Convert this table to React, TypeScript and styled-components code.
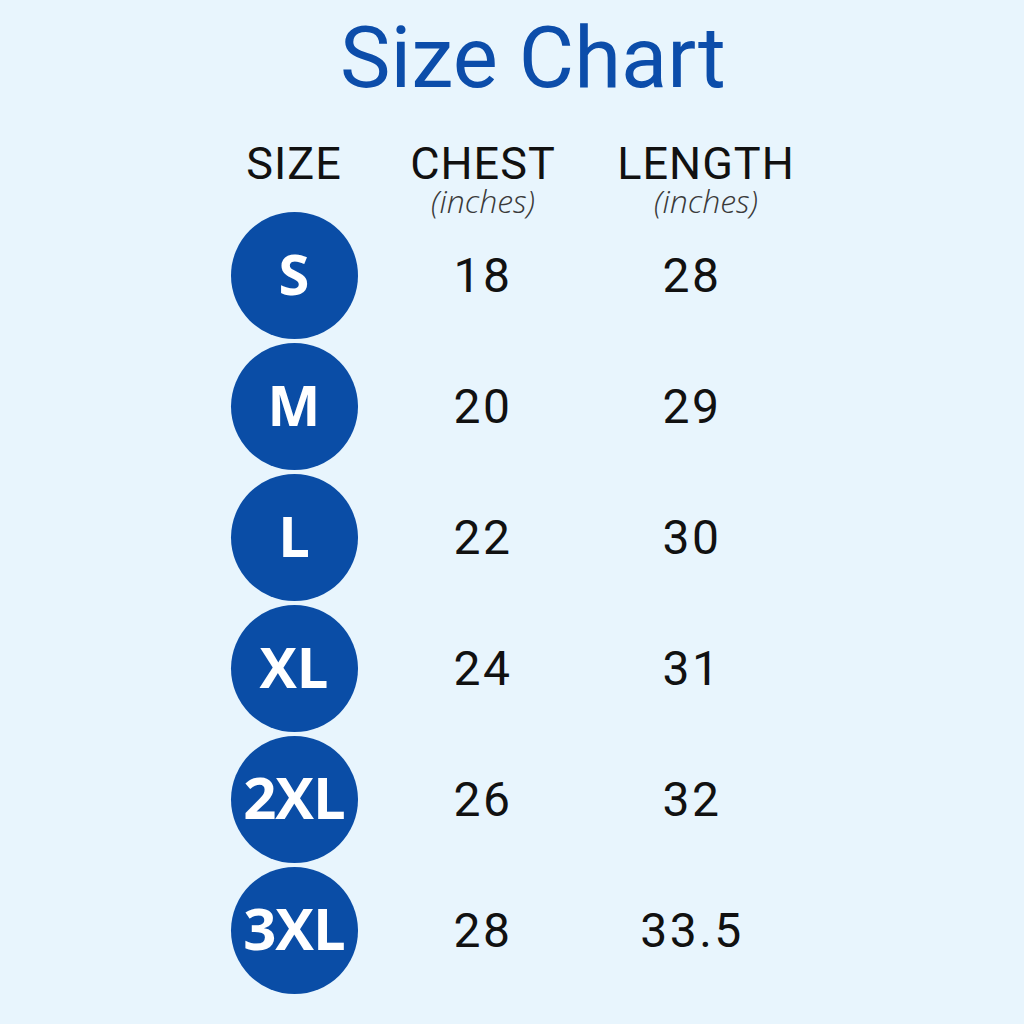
import React from 'react'
import styled, { createGlobalStyle } from 'styled-components'

const sizes = [
  { label: 'S', chest: '18', length: '28' },
  { label: 'M', chest: '20', length: '29' },
  { label: 'L', chest: '22', length: '30' },
  { label: 'XL', chest: '24', length: '31' },
  { label: '2XL', chest: '26', length: '32' },
  { label: '3XL', chest: '28', length: '33.5' },
]

const GlobalStyle = createGlobalStyle`
  html, body {
    margin: 0;
    padding: 0;
    background: #e8f5fd;
  }
`

export default function App() {
  return (
    <>
      <GlobalStyle />
      <S.Page>
        <S.Title>Size Chart</S.Title>
        <S.Grid>
          <S.Head>
            <S.HeadLabel>SIZE</S.HeadLabel>
          </S.Head>
          <S.Head>
            <S.HeadLabel>CHEST</S.HeadLabel>
            <S.Unit>(inches)</S.Unit>
          </S.Head>
          <S.Head $shift={28}>
            <S.HeadLabel>LENGTH</S.HeadLabel>
            <S.Unit>(inches)</S.Unit>
          </S.Head>
          {sizes.map((s) => (
            <React.Fragment key={s.label}>
              <S.Cell>
                <S.Badge $small={s.label.length > 2}>{s.label}</S.Badge>
              </S.Cell>
              <S.Cell>
                <S.Value>{s.chest}</S.Value>
              </S.Cell>
              <S.Cell>
                <S.Value>{s.length}</S.Value>
              </S.Cell>
            </React.Fragment>
          ))}
        </S.Grid>
      </S.Page>
    </>
  )
}

const S = {
  Page: styled.div`
    width: 1024px;
    height: 1024px;
    background: #e8f5fd;
    display: flex;
    flex-direction: column;
    align-items: flex-start;
    box-sizing: border-box;
    padding-top: 10px;
  `,
  Title: styled.h1`
    margin: 0;
    align-self: center;
    padding-left: 42px;
    font-family: Roboto, 'Liberation Sans', sans-serif;
    font-weight: 400;
    font-size: 85px;
    line-height: 96px;
    color: #0c4daa;
  `,
  Grid: styled.div`
    margin-top: 40px;
    margin-left: 224px;
    display: grid;
    grid-template-columns: 140px 238px 180px;
    grid-template-rows: 64px repeat(6, 131px);
  `,
  Head: styled.div<{ $shift?: number }>`
    display: flex;
    flex-direction: column;
    align-items: center;
    padding-left: ${(p) => p.$shift ?? 0}px;
  `,
  HeadLabel: styled.div`
    font-family: Roboto, 'Liberation Sans', sans-serif;
    font-size: 45px;
    line-height: 36px;
    letter-spacing: 1px;
    color: #111;
  `,
  Unit: styled.div`
    margin-top: 3px;
    font-family: 'Open Sans', 'Liberation Sans', sans-serif;
    font-style: italic;
    font-weight: 300;
    font-size: 32px;
    line-height: 32px;
    color: #3a3a3a;
  `,
  Cell: styled.div`
    display: flex;
    align-items: center;
    justify-content: center;
  `,
  Badge: styled.div<{ $small?: boolean }>`
    width: 127px;
    height: 127px;
    border-radius: 50%;
    background: #0a4da6;
    color: #fff;
    display: flex;
    align-items: center;
    justify-content: center;
    padding-bottom: 6px;
    box-sizing: border-box;
    font-family: 'Open Sans', 'Liberation Sans', sans-serif;
    font-weight: 700;
    font-size: ${(p) => (p.$small ? 58 : 56)}px;
    letter-spacing: ${(p) => (p.$small ? -1 : 0)}px;
    white-space: nowrap;
  `,
  Value: styled.div`
    font-family: Roboto, 'Liberation Sans', sans-serif;
    font-size: 48px;
    letter-spacing: 2.5px;
    color: #111;
  `,
}
